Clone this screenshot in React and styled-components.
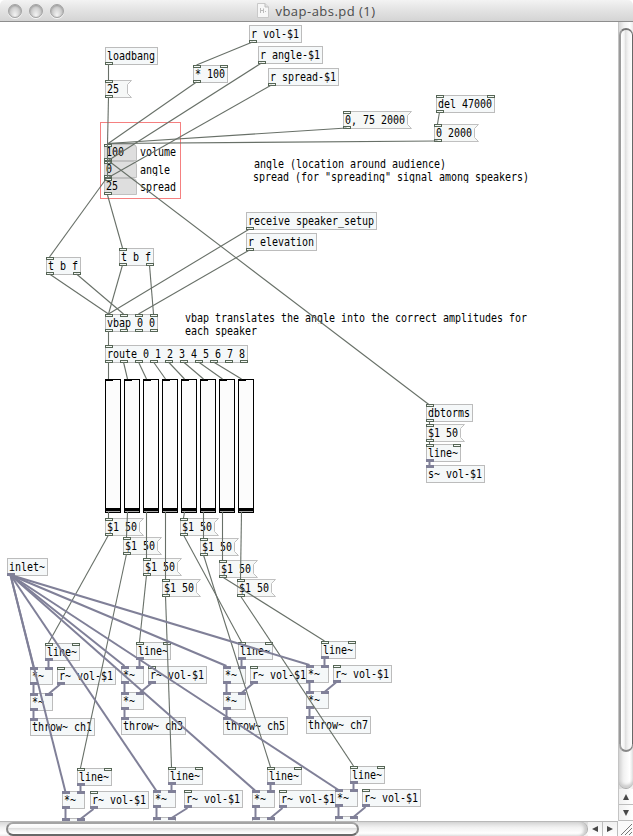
import React from "react";
import styled, { createGlobalStyle, css } from "styled-components";

const GlobalStyle = createGlobalStyle`
  body { margin: 0; background: #fff; overflow: hidden; }
  *, *::before, *::after { box-sizing: border-box; }
`;

const Window = styled.div`
  width: 633px;
  height: 836px;
  display: flex;
  flex-direction: column;
  overflow: hidden;
  background: #fff;
`;

const TitleBar = styled.header`
  flex: 0 0 22px;
  display: grid;
  grid-template-columns: 1fr auto 1fr;
  align-items: center;
  padding: 0 8px;
  border-radius: 5px 5px 0 0;
  border-bottom: 1px solid #8e8e8e;
  background: linear-gradient(#f3f3f3, #e4e4e4 45%, #d4d4d4);
`;

const Lights = styled.div`
  display: flex;
  gap: 7px;
`;

const Light = styled.span`
  width: 14px;
  height: 14px;
  border-radius: 50%;
  border: 1px solid #a2a2a2;
  background: radial-gradient(ellipse at 50% 85%, #f4f4f4 0, #d6d6d6 45%, #b8b8b8 100%);
  box-shadow: 0 1px 0 #f6f6f6, inset 0 1px 2px #999;
`;

const Title = styled.h1`
  display: flex;
  align-items: center;
  gap: 6px;
  margin: 0;
  font: 400 13px/20px "Open Sans", "Noto Sans", sans-serif;
  letter-spacing: 0.47px;
  color: #4b4b4b;
  white-space: nowrap;
`;

const Body = styled.div`
  flex: 1;
  min-height: 0;
  display: grid;
  grid-template-columns: 618px 15px;
  grid-template-rows: 799px 15px;
`;

const Canvas = styled.main`
  position: relative;
  overflow: hidden;
  background: #fff;
  color: #000;
  font: 10px/16px "DejaVu Sans Mono", monospace;
`;

const Patch = styled.div`
  position: absolute;
  inset: -22px 0 0 0;
`;

const placed = css`
  position: absolute;
  left: ${(p) => p.$x}px;
  top: ${(p) => p.$y}px;
`;

const ObjectBox = styled.div`
  ${placed}
  width: ${(p) => p.$w}px;
  height: 18px;
  border: 1px solid #bcbcbc;
  background: #f5f8f9;
  padding: 1px 0 0 1px;
`;

const MessageBox = styled.div`
  ${placed}
  width: ${(p) => p.$w}px;
  height: 18px;
  padding: 2px 0 0 2px;
`;

const NumberBox = styled.div`
  ${placed}
  width: 33px;
  height: 17px;
  padding-left: 1px;
  border: 1px solid #c0c0c0;
  border-top-right-radius: 4px;
  background: #dedede;
`;

const Label = styled.span`
  display: block;
  position: relative;
  white-space: pre;
  letter-spacing: -0.02px;
  transform: scaleY(1.16);
`;

const Shape = styled.svg`
  position: absolute;
  left: 0;
  top: 0;
`;

const Port = styled.i`
  position: absolute;
  left: ${(p) => p.$dx}px;
  ${(p) => (p.$out ? "bottom" : "top")}: ${(p) => p.$edge}px;
  width: 8px;
  height: 3px;
  border: 1px solid ${(p) => (p.$signal ? "#808098" : "#566656")};
  background: ${(p) => (p.$signal ? "#808098" : "#f5f8f5")};
`;

const Comment = styled.p`
  ${placed}
  margin: 0;
  white-space: pre;
  line-height: 13px;
`;

const Frame = styled.div`
  ${placed}
  width: 81px;
  height: 77px;
  border: 1px solid #f58080;
`;

const Slider = styled.div`
  ${placed}
  width: 16px;
  height: 134px;
  display: flex;
  flex-direction: column;
  justify-content: space-between;
  border: 1px solid #000;
  background: #fcfcfc;
`;

const SliderPort = styled.i`
  width: 7px;
  height: 1px;
  background: #000;
`;

const SliderKnob = styled.i`
  height: 4px;
  border-top: 3px solid #000;
  border-bottom: 1px solid #aaa;
`;

const Wires = styled.svg`
  position: absolute;
  left: 0;
  top: 0;
  pointer-events: none;
`;

const VScroll = styled.div`
  display: flex;
  flex-direction: column;
  border-left: 1px solid #c4c4c4;
  background: linear-gradient(90deg, #d7d7d7, #f2f2f2 35%, #fff 75%, #ececec);
`;

const VThumb = styled.div`
  height: 724px;
  margin: 6px 0 0;
  border: solid #777;
  border-width: 2px 1px 2px 2px;
  border-color: #777 #686868 #888 #9a9a9a;
  border-radius: 7px;
  background: linear-gradient(90deg, #fff, #f4f4f4 30%, #dedede 38%, #f3f3f3 65%, #fff);
`;

const VTrackEnd = styled.div`
  flex: 1;
  margin-top: -8px;
  border-bottom: 1px solid #aaa;
  border-radius: 0 0 8px 8px;
  box-shadow: inset 0 -3px 3px #ccc;
`;

const HScroll = styled.div`
  display: flex;
  border-top: 1px solid #b8b8b8;
  background: linear-gradient(#d8d8d8, #f2f2f2 40%, #fff 80%, #eee);
`;

const HThumb = styled.div`
  width: 353px;
  margin-left: 6px;
  border: solid #888;
  border-width: 2px 2px 2px;
  border-color: #a4a4a4 #888 #686868;
  border-radius: 7px;
  background: linear-gradient(#fff, #f7f7f7 35%, #dedede 45%, #f3f3f3 70%, #fff);
`;

const HTrackEnd = styled.div`
  flex: 1;
  border-right: 1px solid #aaa;
  border-radius: 0 8px 8px 0;
  box-shadow: inset -3px 0 3px #ccc;
`;

const ArrowButton = styled.span`
  flex: 0 0 ${(p) => (p.$vertical ? 16 : 15)}px;
  display: flex;
  align-items: center;
  justify-content: center;
  background: linear-gradient(${(p) => (p.$vertical ? "90deg" : "180deg")}, #f0f0f0, #fff);
  border: 0 solid #bdbdbd;
  ${(p) => (p.$vertical ? "border-bottom-width" : "border-right-width")}: 1px;
`;

const Corner = styled.div`
  display: flex;
  background: #fafafa;
`;

const ctl = (n) => Array(n).fill(0);
const sig = (n) => Array(n).fill(1);

// The low rows run past the bottom of the canvas, so their chains stop early.
const channels = [
  { name: "ch1", dx: 0, dy: 0, rx: 57 },
  { name: "ch3", dx: 91, dy: -1, rx: 148 },
  { name: "ch5", dx: 193, dy: -1, rx: 250 },
  { name: "ch7", dx: 276, dy: -2, rx: 333 },
  { name: "ch2", dx: 32, dy: 125, rx: 90, low: true },
  { name: "ch4", dx: 123, dy: 124, rx: 184, low: true },
  { name: "ch6", dx: 222, dy: 124, rx: 279, low: true },
  { name: "ch8", dx: 305, dy: 123, rx: 362, low: true },
];

const objects = [
  ["loadbang", 105, 47, [], ctl(1)],
  ["* 100", 193, 65, ctl(2), ctl(1)],
  ["r vol-$1", 249, 25, [], ctl(1)],
  ["r angle-$1", 258, 46, [], ctl(1)],
  ["r spread-$1", 268, 68, [], ctl(1)],
  ["del 47000", 436, 95, ctl(2), ctl(1)],
  ["receive speaker_setup", 246, 212, [], ctl(1)],
  ["r elevation", 246, 233, [], ctl(1)],
  ["t b f", 46, 257, ctl(1), ctl(2)],
  ["t b f", 119, 248, ctl(1), ctl(2)],
  ["vbap 0 0", 105, 314, ctl(4), ctl(4)],
  ["route 0 1 2 3 4 5 6 7 8", 105, 345, ctl(1), ctl(10)],
  ["dbtorms", 426, 404, ctl(1), ctl(1)],
  ["line~", 426, 444, ctl(2), sig(1)],
  ["s~ vol-$1", 426, 465, sig(1), []],
  ["inlet~", 7, 558, [], sig(1)],
  ...channels.flatMap(({ name, dx, dy, rx, low }) => {
    const m = dy - (low ? 1 : 0);
    return [
      ["line~", 45 + dx, 643 + dy, ctl(2), sig(1)],
      ["r~ vol-$1", rx, 667 + m, ctl(1), sig(1)],
      ["*~", 30 + dx, 667 + m, sig(2), sig(1)],
      [low ? "" : "*~", 30 + dx, 693 + dy, sig(2), sig(1)],
      ...(low ? [] : [["throw~ " + name, 30 + dx, 718 + dy, sig(1), []]]),
    ];
  }),
];

const faders = [
  [105, 518], [123, 537], [143, 558], [162, 579],
  [180, 518], [200, 538], [219, 560], [237, 579],
];

const messages = [
  ["25", 105, 80, 27],
  ["0, 75 2000", 343, 111, 69],
  ["0 2000", 434, 124, 45],
  ["$1 50", 426, 424, 39],
  ...faders.map(([x, y]) => ["$1 50", x, y, 39]),
];

const faderTargets = [0, 4, 1, 5, 2, 6, 3, 7].map((i) => channels[i]);

const controlWires = [
  [109, 64, 109, 80], [109, 97, 108, 144], [253, 42, 197, 65], [197, 82, 108, 144],
  [262, 63, 108, 161], [272, 85, 108, 178], [347, 128, 108, 143.5], [438, 141, 108, 143.5],
  [440, 112, 438, 124], [108, 160, 430, 405], [108, 177, 50, 257], [108, 195, 123, 248],
  [50, 274, 109, 314], [77, 274, 124, 314], [123, 265, 109, 314], [150, 265, 154, 314],
  [250, 229, 109, 314], [250, 250, 139, 314], [109, 331, 109, 345],
  [108, 144, 108, 178],
  [430, 421, 430, 424], [430, 441, 430, 444],
  ...faders.map((_, i) => [109 + 15 * i, 362, 109 + 19 * i, 379]),
  ...faders.map(([x, y], i) => [109 + 19 * i, 512, x + 4, y]),
  ...faders.map(([x, y], i) => [x + 4, y + 17, 49 + faderTargets[i].dx, 643 + faderTargets[i].dy]),
];

const signalWires = [
  [430, 461, 430, 466],
  ...channels.flatMap(({ dx, dy, rx, low }) => [
    [11, 575, 34 + dx, 667 + dy],
    [49 + dx, 660 + dy, 49 + dx, 668 + dy],
    [34 + dx, 684 + dy, 34 + dx, 694 + dy],
    [rx + 4, 684 + dy, 49 + dx, 694 + dy],
    ...(low ? [] : [[34 + dx, 710 + dy, 34 + dx, 719 + dy]]),
  ]),
];

function Ports({ kinds, width, out, bordered }) {
  const off = bordered ? -1 : 0;
  const step = kinds.length > 1 ? (width - 8) / (kinds.length - 1) : 0;
  return kinds.map((k, i) => (
    <Port key={i} $dx={off + step * i} $edge={off} $out={out} $signal={k === 1} />
  ));
}

function PdObject({ text, x, y, ins, outs }) {
  const w = Math.max(23, text.length * 6 + 5);
  return (
    <ObjectBox $x={x} $y={y} $w={w}>
      {text && <Label>{text}</Label>}
      <Ports kinds={ins} width={w} bordered />
      <Ports kinds={outs} width={w} out bordered />
    </ObjectBox>
  );
}

function PdMessage({ text, x, y, w }) {
  return (
    <MessageBox $x={x} $y={y} $w={w}>
      <Shape width={w} height="18">
        <path
          d={`M.5.5H${w - 0.5}L${w - 4.5} 4.5V13.5L${w - 0.5} 17.5H.5Z`}
          fill="#f6f8f7"
          stroke="#c0c0c0"
        />
      </Shape>
      <Label>{text}</Label>
      <Ports kinds={[0]} width={w} />
      <Ports kinds={[0]} width={w} out />
    </MessageBox>
  );
}

function WireSet({ wires, color, width }) {
  return (
    <g stroke={color} strokeWidth={width}>
      {wires.map(([x1, y1, x2, y2], i) => (
        <line key={i} x1={x1 - 0.5} y1={y1} x2={x2 - 0.5} y2={y2} />
      ))}
    </g>
  );
}

function Arrow({ angle }) {
  return (
    <svg width="8" height="8" viewBox="0 0 8 8">
      <path d="M4 1L7 7H1Z" fill="#484848" transform={`rotate(${angle} 4 4)`} />
    </svg>
  );
}

function DocumentIcon() {
  return (
    <svg width="12" height="15" viewBox="0 0 12 15">
      <path d="M.5.5H8L11.5 4V14.5H.5Z" fill="#f7f7f7" stroke="#c9c9c9" />
      <path d="M8 .5V4H11.5" fill="#e2e2e2" stroke="#bdbdbd" />
      <path d="M3.5 5V10M3.5 7.5H6M6.5 5.5V10M8 8.5H9" stroke="#bbb" fill="none" />
    </svg>
  );
}

export default function App() {
  return (
    <Window>
      <GlobalStyle />
      <TitleBar>
        <Lights><Light /><Light /><Light /></Lights>
        <Title><DocumentIcon />vbap-abs.pd (1)</Title>
      </TitleBar>
      <Body>
        <Canvas>
          <Patch>
            {objects.map(([text, x, y, ins, outs], i) => (
              <PdObject key={i} text={text} x={x} y={y} ins={ins} outs={outs} />
            ))}
            {faders.map((_, i) => (
              <Slider key={i} $x={105 + 19 * i} $y={379}>
                <SliderPort />
                <SliderKnob />
              </Slider>
            ))}
            {messages.map(([text, x, y, w], i) => (
              <PdMessage key={i} text={text} x={x} y={y} w={w} />
            ))}
            {[["100", 144], ["0", 161], ["25", 178]].map(([text, y]) => (
              <NumberBox key={y} $x={104} $y={y}>
                <Label>{text}</Label>
                <Ports kinds={[0]} width={33} bordered />
                <Ports kinds={[0]} width={33} out bordered />
              </NumberBox>
            ))}
            <Comment $x={140} $y={145}><Label>volume</Label></Comment>
            <Comment $x={140} $y={163}><Label>angle</Label></Comment>
            <Comment $x={140} $y={180}><Label>spread</Label></Comment>
            <Comment $x={254} $y={157}><Label>angle (location around audience)</Label></Comment>
            <Comment $x={253} $y={170}><Label>spread (for "spreading" signal among speakers)</Label></Comment>
            <Comment $x={185} $y={311}>
              <Label>vbap translates the angle into the correct amplitudes for</Label>
              <Label>each speaker</Label>
            </Comment>
            <Frame $x={100} $y={122} />
            <Wires width="618" height="821">
              <WireSet wires={controlWires} color="#687068" width={1.1} />
              <WireSet wires={signalWires} color="#808098" width={2} />
            </Wires>
          </Patch>
        </Canvas>
        <VScroll>
          <VThumb />
          <VTrackEnd />
          <ArrowButton $vertical><Arrow angle={0} /></ArrowButton>
          <ArrowButton $vertical><Arrow angle={180} /></ArrowButton>
        </VScroll>
        <HScroll>
          <HThumb />
          <HTrackEnd />
          <ArrowButton><Arrow angle={-90} /></ArrowButton>
          <ArrowButton><Arrow angle={90} /></ArrowButton>
        </HScroll>
        <Corner>
          <svg width="15" height="15" viewBox="0 0 15 15">
            <path d="M3 14L14 3M7 14L14 7M11 14L14 11" stroke="#777" />
          </svg>
        </Corner>
      </Body>
    </Window>
  );
}
